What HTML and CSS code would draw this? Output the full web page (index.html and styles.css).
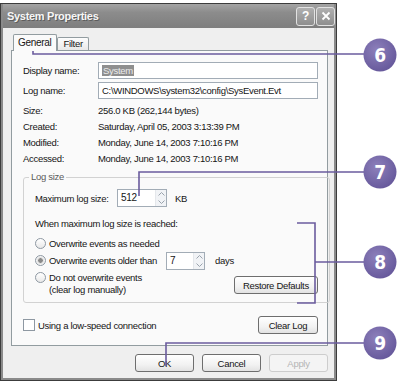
FILE: index.html
```html
<!DOCTYPE html>
<html lang="en">
<head>
    <meta charset="UTF-8">
    <title>System Properties</title>
    <link rel="stylesheet" href="styles.css">
</head>
<body>
<div class="page">
    <div class="window">
        <div class="titlebar">
            <span class="title">System Properties</span>
            <div class="caption-btns">
                <span class="cbtn">?</span>
                <span class="cbtn">
                    <svg width="10" height="10" viewBox="0 0 10 10"><path d="M1.5 1.5 L8.5 8.5 M8.5 1.5 L1.5 8.5" stroke="#fff" stroke-width="1.8"/></svg>
                </span>
            </div>
        </div>
        <div class="client">
            <div class="tabs">
                <span class="tab active">General</span>
                <span class="tab">Filter</span>
            </div>
            <div class="panel">
                <div class="field">
                    <span>Display name:</span>
                    <div class="input"><span class="sel">System</span></div>
                </div>
                <div class="field">
                    <span>Log name:</span>
                    <div class="input">C:\WINDOWS\system32\config\SysEvent.Evt</div>
                </div>
                <div class="info">
                    <span>Size:</span><span>256.0 KB (262,144 bytes)</span>
                    <span>Created:</span><span>Saturday, April 05, 2003 3:13:39 PM</span>
                    <span>Modified:</span><span>Monday, June 14, 2003 7:10:16 PM</span>
                    <span>Accessed:</span><span>Monday, June 14, 2003 7:10:16 PM</span>
                </div>
                <fieldset class="group">
                    <legend>Log size</legend>
                    <div class="maxrow">
                        <span class="maxlabel">Maximum log size:</span>
                        <div class="spin wide">
                            <span class="spin-val">512</span>
                            <span class="arrows">
                                <svg width="7" height="4" viewBox="0 0 7 4"><path d="M0.5 3.5 L3.5 0.5 L6.5 3.5" fill="none" stroke="#9aa3ad"/></svg>
                                <svg width="7" height="4" viewBox="0 0 7 4"><path d="M0.5 0.5 L3.5 3.5 L6.5 0.5" fill="none" stroke="#9aa3ad"/></svg>
                            </span>
                        </div>
                        <span class="unit">KB</span>
                    </div>
                    <p class="when">When maximum log size is reached:</p>
                    <div class="opts">
                        <div class="radios">
                            <div class="radio-row"><span class="radio"></span><span>Overwrite events as needed</span></div>
                            <div class="radio-row">
                                <span class="radio checked"></span>
                                <span class="older">Overwrite events older than</span>
                                <div class="spin small">
                                    <span class="spin-val">7</span>
                                    <span class="arrows">
                                        <svg width="7" height="4" viewBox="0 0 7 4"><path d="M0.5 3.5 L3.5 0.5 L6.5 3.5" fill="none" stroke="#9aa3ad"/></svg>
                                        <svg width="7" height="4" viewBox="0 0 7 4"><path d="M0.5 0.5 L3.5 3.5 L6.5 0.5" fill="none" stroke="#9aa3ad"/></svg>
                                    </span>
                                </div>
                                <span class="unit days">days</span>
                            </div>
                            <div class="radio-row tall"><span class="radio"></span><span>Do not overwrite events<br>(clear log manually)</span></div>
                        </div>
                        <button class="btn restore">Restore Defaults</button>
                    </div>
                </fieldset>
                <div class="bottomrow">
                    <label class="check"><span class="box"></span>Using a low-speed connection</label>
                    <button class="btn clear">Clear Log</button>
                </div>
            </div>
            <div class="dlg-btns">
                <button class="btn">OK</button>
                <button class="btn">Cancel</button>
                <button class="btn" disabled>Apply</button>
            </div>
        </div>
    </div>

    <svg class="callouts" width="400" height="385" viewBox="0 0 400 385">
        <defs>
            <radialGradient id="ball" cx="0.4" cy="0.35" r="0.7">
                <stop offset="0" stop-color="#8d80bb"/>
                <stop offset="1" stop-color="#65579a"/>
            </radialGradient>
        </defs>
        <g fill="none" stroke="#6b5c9e" stroke-width="1.6">
            <path d="M33 46 V54 H364"/>
            <path d="M139 196 V172 H364"/>
            <path d="M297 223 H315 V303 H297 M315 262 H364"/>
            <path d="M166 366 V343 H364"/>
        </g>
        <g fill="url(#ball)">
            <circle cx="380" cy="55" r="16.5"/>
            <circle cx="380" cy="172" r="16.5"/>
            <circle cx="380" cy="262" r="16.5"/>
            <circle cx="380" cy="343" r="16.5"/>
        </g>
        <g class="num" text-anchor="middle">
            <text x="380" y="62">6</text>
            <text x="380" y="179">7</text>
            <text x="380" y="269">8</text>
            <text x="380" y="350">9</text>
        </g>
    </svg>
</div>
</body>
</html>
```

FILE: styles.css
```css
body {
    margin: 0;
    background: #fff;
    font-family: "Liberation Sans", Arial, sans-serif;
    font-size: 9.5px;
    letter-spacing: -0.3px;
    color: #151515;
}
.page {
    position: relative;
    width: 400px;
    height: 385px;
    overflow: hidden;
}
.window {
    margin-top: 3px;
    width: 337px;
    height: 378px;
    box-sizing: border-box;
    border: 1px solid #3c3c3c;
    background: #8a8a8a;
    padding: 0 2px 2px;
    display: flex;
    flex-direction: column;
}
.titlebar {
    height: 24px;
    display: flex;
    align-items: center;
    justify-content: space-between;
    background: linear-gradient(#a4a4a4, #8c8c8c 35%, #7e7e7e);
    padding-left: 4px;
}
.title {
    font-weight: bold;
    font-size: 11px;
    letter-spacing: -0.3px;
    color: #f6f6f6;
    text-shadow: 1px 1px 0 #5c5c5c;
}
.caption-btns { display: flex; gap: 1px; margin-right: -1px; }
.cbtn {
    width: 17px;
    height: 17px;
    border: 1px solid #e2e2e2;
    border-radius: 3px;
    background: linear-gradient(#b0b0b0, #8e8e8e);
    color: #fff;
    font-weight: bold;
    font-size: 12px;
    display: flex;
    align-items: center;
    justify-content: center;
}
.client {
    flex: 1;
    background: #efefef;
    padding: 7px 6px 6px 8px;
    display: flex;
    flex-direction: column;
}
.tabs {
    display: flex;
    align-items: flex-end;
    height: 15px;
    padding-left: 2px;
    position: relative;
    z-index: 1;
}
.tab {
    height: 12px;
    padding: 0 5px;
    border: 1px solid #929ca0;
    border-bottom: none;
    background: linear-gradient(#fdfdfd, #e8e8e8);
    line-height: 12px;
    border-radius: 2px 2px 0 0;
}
.tab.active {
    height: 16px;
    line-height: 15px;
    margin-bottom: -1px;
    padding: 0 5px 0 4px;
    background: #fafafa;
    font-size: 10px;
}
.panel {
    flex: 1;
    border: 1px solid #929ca0;
    background: #fafafa;
    padding: 11px 9px 0 11px;
}
.field {
    display: grid;
    grid-template-columns: 75px 1fr;
    align-items: center;
    height: 17px;
    margin-bottom: 3px;
}
.input {
    height: 17px;
    box-sizing: border-box;
    border: 1px solid #a2acb6;
    background: #fff;
    padding: 0 3px;
    line-height: 15px;
    white-space: nowrap;
}
.sel { background: #8f8f8f; color: #ececec; padding: 0 1px; }
.info {
    display: grid;
    grid-template-columns: 75px 1fr;
    grid-auto-rows: 16px;
    align-items: center;
    margin-top: 2px;
}
.group {
    margin: 5px 0 0;
    padding: 0 11px 4px;
    border: 1px solid #d2d2d2;
    border-radius: 3px;
}
.group legend {
    padding: 0 2px;
    margin-left: -6px;
    line-height: 12px;
    color: #5a5a5a;
}
.maxrow {
    display: flex;
    align-items: center;
    height: 18px;
    margin-top: 6px;
}
.maxlabel { width: 82px; }
.spin {
    height: 18px;
    box-sizing: border-box;
    border: 1px solid #a2acb6;
    background: #fff;
    display: flex;
    justify-content: space-between;
}
.spin.wide { width: 50px; }
.spin.small { width: 39px; }
.spin-val { padding-left: 3px; line-height: 16px; font-size: 10px; }
.arrows {
    width: 10px;
    display: flex;
    flex-direction: column;
    align-items: center;
    justify-content: space-around;
    background: #f1f3f6;
    border-left: 1px solid #e4e7eb;
}
.unit { margin-left: 8px; }
.unit.days { margin-left: 10px; }
.when {
    margin: 11px 0 0;
    line-height: 12px;
}
.opts {
    display: flex;
    justify-content: space-between;
    margin-top: 5px;
}
.radio-row {
    display: flex;
    align-items: center;
    height: 17px;
}
.radio-row.tall {
    align-items: flex-start;
    height: 29px;
    padding-top: 3px;
    box-sizing: border-box;
    line-height: 12px;
}
.radio {
    width: 11px;
    height: 11px;
    box-sizing: border-box;
    border: 1px solid #8e98a2;
    border-radius: 50%;
    background: linear-gradient(#fff, #e9e9e9);
    margin-right: 3px;
    flex: none;
}
.radio.checked {
    background: radial-gradient(circle, #8a8a8a 0 2px, #d8d8d8 2.5px, #f4f4f4 4px);
}
.older { width: 117px; }
.btn {
    height: 18px;
    box-sizing: border-box;
    border: 1px solid #6e6e6e;
    border-radius: 3px;
    background: linear-gradient(#ffffff, #f2f2f2 60%, #e2e2e2);
    font-family: "Liberation Sans", Arial, sans-serif;
    font-size: 9.5px;
    letter-spacing: -0.3px;
    color: #151515;
    padding: 0;
}
.btn:disabled { color: #b4b4b4; border-color: #cdcdcd; background: #f4f4f4; }
.restore { width: 84px; margin-top: 41px; }
.bottomrow {
    display: flex;
    justify-content: space-between;
    align-items: center;
    height: 18px;
    margin-top: 13px;
}
.check { display: flex; align-items: center; }
.box {
    width: 12px;
    height: 12px;
    box-sizing: border-box;
    border: 1px solid #8e98a2;
    background: #fff;
    margin-right: 3px;
}
.clear { width: 60px; }
.dlg-btns {
    display: flex;
    justify-content: flex-end;
    gap: 8px;
    margin-top: 8px;
}
.dlg-btns .btn { width: 59px; }
.callouts {
    position: absolute;
    left: 0;
    top: 0;
    pointer-events: none;
}
.num text {
    font-family: "Liberation Sans Narrow", "DejaVu Sans Condensed", "Liberation Sans", sans-serif;
    font-weight: bold;
    font-size: 19px;
    fill: #fff;
}
```
